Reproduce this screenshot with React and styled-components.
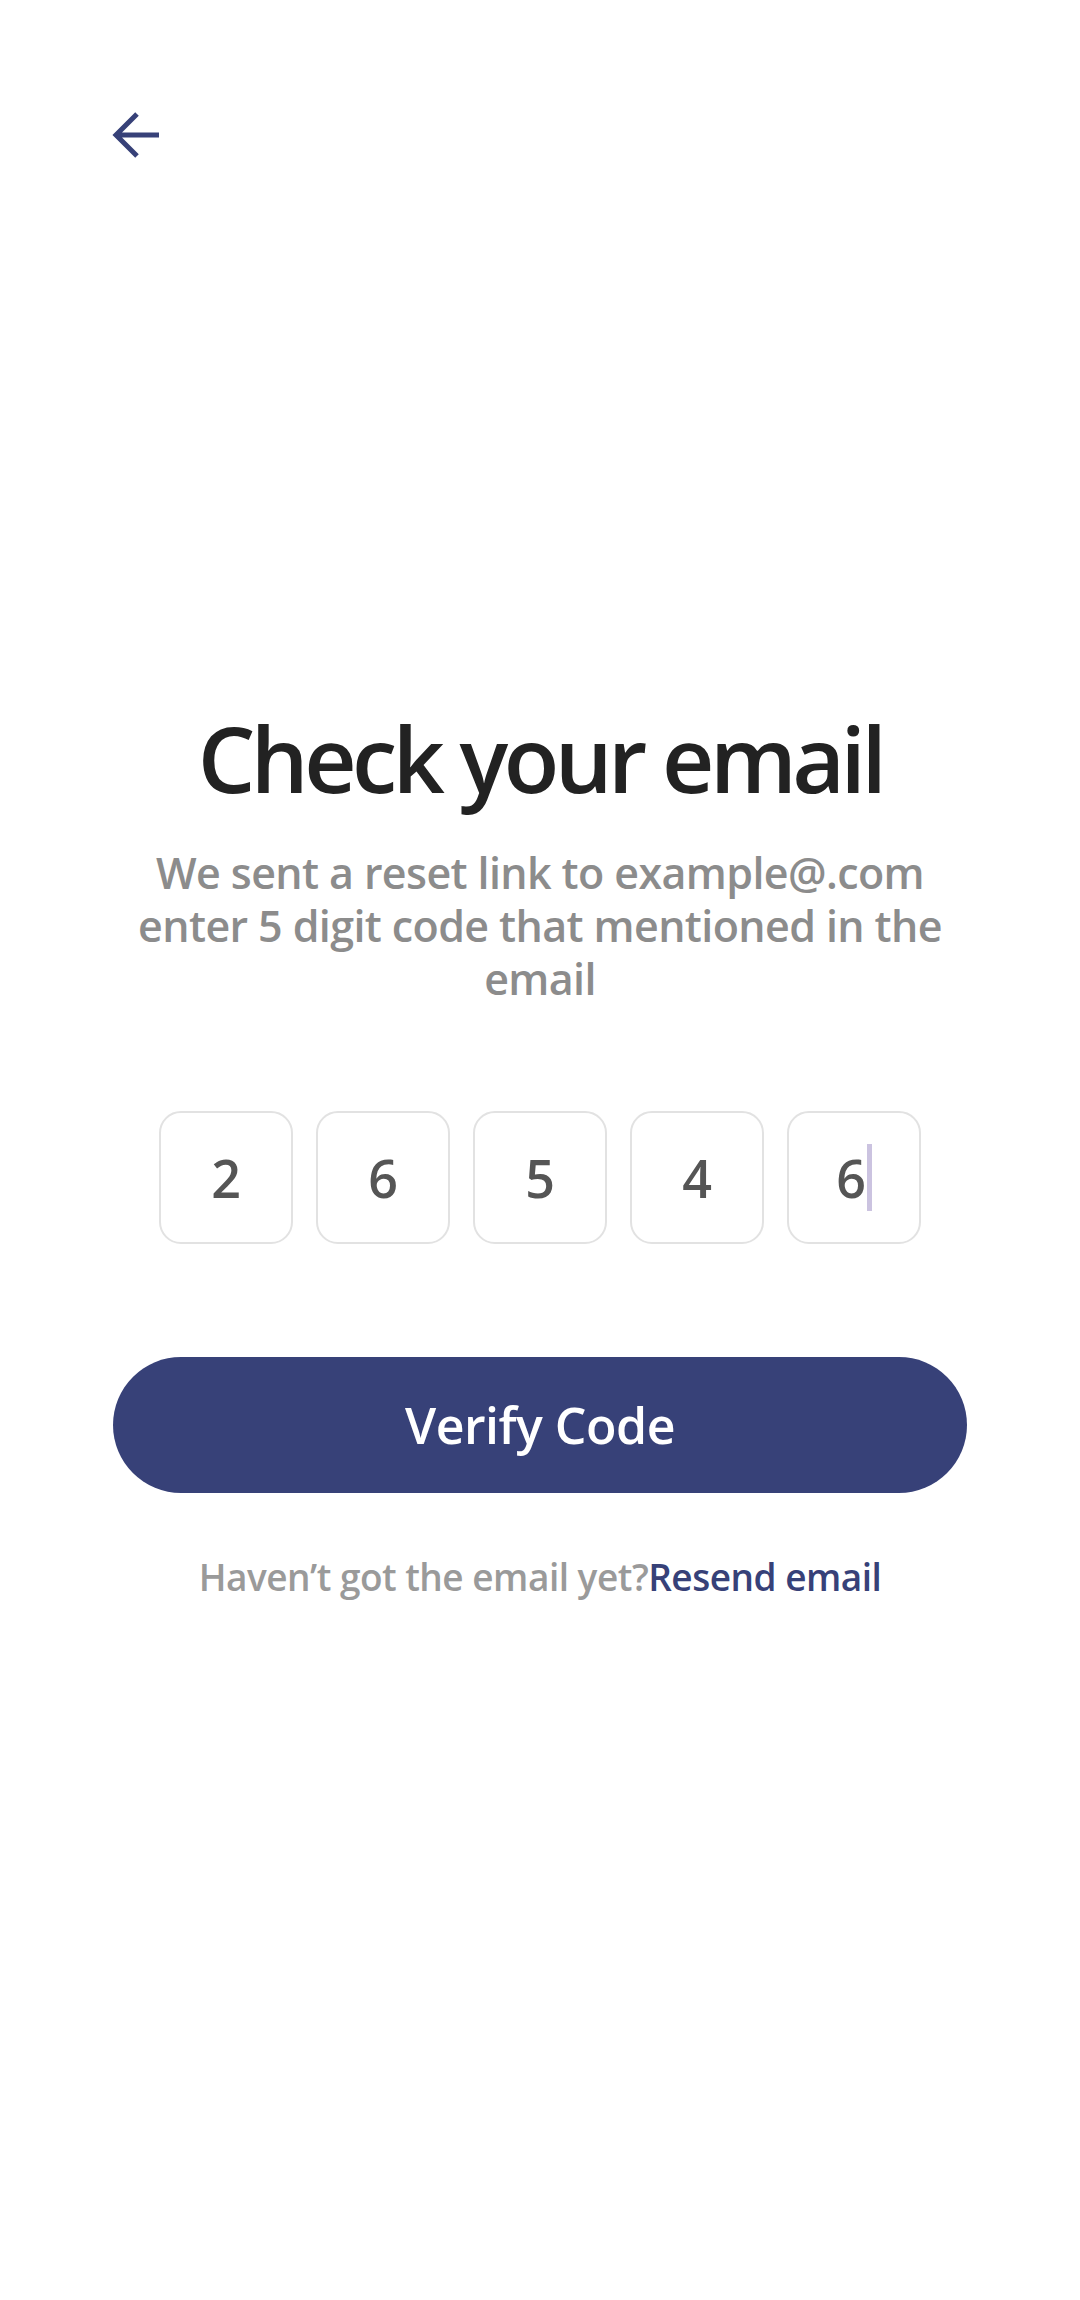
import React from "react";
import styled, { createGlobalStyle } from "styled-components";

const GlobalStyle = createGlobalStyle`
  html, body {
    margin: 0;
    padding: 0;
    background: #ffffff;
  }
  body {
    font-family: "Open Sans", "Noto Sans", sans-serif;
  }
`;

const digits = ["2", "6", "5", "4", "6"];

export default function App() {
  return (
    <>
      <GlobalStyle />
      <Screen>
        <TopBar>
          <BackButton aria-label="Back">
            <svg width="48" height="48" viewBox="0 0 48 48" fill="none">
              <path
                d="M48 24H5M26 3L5 24L26 45"
                stroke="#374178"
                strokeWidth="5"
                strokeLinejoin="miter"
              />
            </svg>
          </BackButton>
        </TopBar>

        <Content>
          <Title>Check your email</Title>
          <Subtitle>
            We sent a reset link to example@.com
            <br />
            enter 5 digit code that mentioned in the email
          </Subtitle>

          <CodeRow>
            {digits.map((d, i) => (
              <CodeBox key={i}>
                {d}
                {i === digits.length - 1 && <Caret />}
              </CodeBox>
            ))}
          </CodeRow>

          <PrimaryButton>Verify Code</PrimaryButton>

          <Hint>
            Haven’t got the email yet?<Link>Resend email</Link>
          </Hint>
        </Content>
      </Screen>
    </>
  );
}

const Screen = styled.main`
  min-height: 2300px;
  background: #ffffff;
  display: flex;
  flex-direction: column;
`;

const TopBar = styled.div`
  padding: 111px 0 0 111px;
  display: flex;
`;

const BackButton = styled.button`
  width: 48px;
  height: 48px;
  padding: 0;
  border: none;
  background: none;
  display: flex;
`;

const Content = styled.section`
  display: flex;
  flex-direction: column;
  align-items: center;
  padding: 0 113px;
  margin-top: 545px;
`;

const Title = styled.h1`
  margin: 0;
  font-size: 91px;
  line-height: 108px;
  font-weight: 600;
  color: #222222;
  letter-spacing: -4.5px;
`;

const Subtitle = styled.p`
  margin: 34px 0 0;
  font-size: 43px;
  line-height: 53px;
  font-weight: 600;
  color: #8c8c8c;
  text-align: center;
  letter-spacing: -0.6px;
`;

const CodeRow = styled.div`
  display: flex;
  gap: 23px;
  margin-top: 106px;
`;

const CodeBox = styled.div`
  width: 134px;
  height: 133px;
  box-sizing: border-box;
  border: 2.5px solid #e2e2e2;
  border-radius: 22px;
  display: flex;
  align-items: center;
  justify-content: center;
  font-size: 52px;
  font-weight: 600;
  color: #555555;
`;

const Caret = styled.span`
  display: inline-block;
  width: 5px;
  height: 67px;
  background: #cbc3e0;
  margin-left: 1px;
`;

const PrimaryButton = styled.button`
  margin-top: 113px;
  width: 100%;
  height: 136px;
  border: none;
  border-radius: 68px;
  background: #374178;
  color: #ffffff;
  font-family: "Open Sans", "Noto Sans", sans-serif;
  font-size: 50px;
  font-weight: 600;
  letter-spacing: -0.5px;
`;

const Hint = styled.p`
  margin: 61px 0 0;
  font-size: 37px;
  line-height: 46px;
  font-weight: 600;
  color: #9a9a9a;
  letter-spacing: -0.5px;
`;

const Link = styled.span`
  color: #374178;
`;
